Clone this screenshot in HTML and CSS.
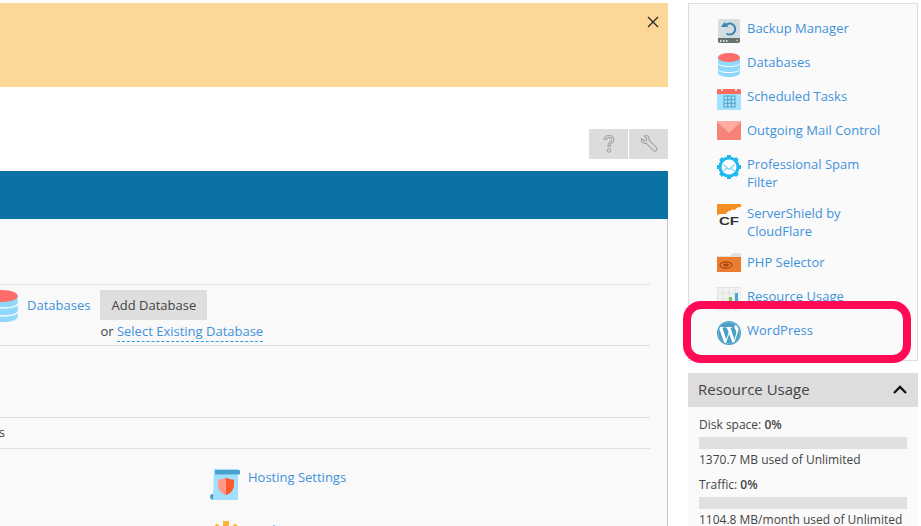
FILE: index.html
```html
<!DOCTYPE html>
<html lang="en">
<head>
<meta charset="utf-8">
<title>Hosting panel</title>
<link rel="stylesheet" href="styles.css">
</head>
<body>
<div class="page">
  <main class="main">
    <div class="banner">
      <svg class="close" width="12" height="12" viewBox="0 0 12 12"><path d="M1 1l10 10M11 1L1 11" stroke="#222" stroke-width="1.2" fill="none"/></svg>
    </div>
    <div class="toolbar">
      <button class="tool" type="button" aria-label="Help">
        <svg width="16" height="20" viewBox="0 0 16 20"><path d="M3 5.500C3 3 5.200 1.500 8 1.500s5 1.500 5 4c0 2.200-1.700 3-3 4-1 .8-1 1.500-1 3H7c0-2.200.3-3.200 1.600-4.200 1.200-.9 2-1.500 2-2.800 0-1.200-1.100-1.900-2.600-1.900S5.400 4.300 5.400 5.500z" fill="none" stroke="#a3a3a3" stroke-width="1.100"/><circle cx="8" cy="16.500" r="1.700" fill="none" stroke="#a3a3a3" stroke-width="1.100"/></svg>
      </button>
      <button class="tool" type="button" aria-label="Settings">
        <svg width="18" height="18" viewBox="0 0 18 18"><path d="M1.500 3.500L4 6l2.200-.4L6.800 3.400 4.200 1C6.400 0 8.500.8 9 2.800c.2.800.1 1.500-.1 2.200l7.300 7.300c1 1 1 2.300.2 3.100-.9.900-2.200.9-3.100 0L6 8.200c-.8.2-1.600.2-2.300 0C1.700 7.500 1 5.500 1.500 3.500z" fill="none" stroke="#a3a3a3" stroke-width="1.100" stroke-linejoin="round"/></svg>
      </button>
    </div>
    <div class="titlebar"></div>
    <div class="panel">
      <div class="row row-db">
        <svg class="db-icon" width="32" height="32" viewBox="0 0 24 24"><use href="#i-db"/></svg>
        <a class="link db-link" href="#">Databases</a>
        <div class="db-actions">
          <button class="btn" type="button">Add Database</button>
          <p class="or">or <a class="link dashed" href="#">Select Existing Database</a></p>
        </div>
      </div>
      <div class="row row-empty"></div>
      <div class="row row-text"><span class="clipped">Websites</span></div>
      <div class="tools">
        <a class="tool-item" href="#">
          <svg width="32" height="32" viewBox="0 0 32 32"><path d="M0 28.500c0-1.500 1-2.500 2-2.500h4v6H3.500C1.500 32 0 30.500 0 28.500z" fill="#4ba3cd"/><path d="M4 1h24v31H3z" fill="#a0e0fe"/><rect x="5" y="2" width="25" height="4.500" rx="1" fill="#4ba3cd"/><path d="M8 11.500c2.500 0 6-.8 8-1.800v17.500c-4-1.500-8-5-8-10z" fill="#ff9686"/><path d="M16 9.700c2 1 5.500 1.800 8 1.800v5.700c0 5-4 8.500-8 10z" fill="#ff5a2c"/></svg>
          <span class="link">Hosting Settings</span>
        </a>
        <a class="tool-item" href="#">
          <svg width="32" height="32" viewBox="0 0 32 32"><circle cx="16" cy="16" r="11" fill="#ffb62e"/><g fill="#ffb62e"><rect x="13" y="0" width="6" height="32"/><rect x="0" y="13" width="32" height="6"/><rect x="13" y="0" width="6" height="32" transform="rotate(45 16 16)"/><rect x="13" y="0" width="6" height="32" transform="rotate(-45 16 16)"/></g></svg>
          <span class="link">Applications</span>
        </a>
      </div>
    </div>
  </main>

  <aside class="side">
    <section class="tools-box">
      <ul class="menu">
        <li><svg width="24" height="24" viewBox="0 0 24 24"><rect x="1" y="0" width="22" height="24" rx="2" fill="#d4dde1"/><path d="M1 19h22v3a2 2 0 0 1-2 2H3a2 2 0 0 1-2-2z" fill="#66706f"/><rect x="3" y="21" width="1.500" height="2" fill="#ddd"/><rect x="6" y="21" width="1.500" height="2" fill="#ddd"/><rect x="9" y="21" width="1.500" height="2" fill="#ddd"/><circle cx="20" cy="21.500" r="1" fill="#9c6"/><path d="M8.500 6.500A5.500 5.500 0 1 1 9.500 14.500" fill="none" stroke="#3b86ad" stroke-width="2"/><path d="M4 8h7.500l-4-5z" fill="#3b86ad"/></svg><a class="link" href="#">Backup Manager</a></li>
        <li><svg width="24" height="24" viewBox="0 0 24 24"><use href="#i-db"/></svg><a class="link" href="#">Databases</a></li>
        <li><svg width="24" height="24" viewBox="0 0 24 24"><rect y="2" width="24" height="21" fill="#a4e1fe"/><path d="M0 7V4a2 2 0 0 1 2-2h20a2 2 0 0 1 2 2v3z" fill="#fd6a5c"/><rect x="4" y="0" width="2" height="4" rx="1" fill="#f3f3f3"/><rect x="18" y="0" width="2" height="4" rx="1" fill="#f3f3f3"/><g fill="none" stroke="#4a9cc0" stroke-width=".9"><rect x="7" y="9" width="11" height="11"/><path d="M10.700 9v11M14.300 9v11M7 12.700h11M7 16.300h11"/></g></svg><a class="link" href="#">Scheduled Tasks</a></li>
        <li><svg width="24" height="24" viewBox="0 0 24 24"><rect y="0" width="24" height="19" rx="1" fill="#f6827a"/><path d="M0 1a1 1 0 0 1 1-1h22a1 1 0 0 1 1 1L12 12z" fill="#ffaba2"/></svg><a class="link" href="#">Outgoing Mail Control</a></li>
        <li class="tall"><svg width="24" height="24" viewBox="0 0 24 24"><g fill="#1fb9ef"><rect x="10" y="0" width="4" height="24"/><rect x="0" y="10" width="24" height="4"/><rect x="10" y="0" width="4" height="24" transform="rotate(45 12 12)"/><rect x="10" y="0" width="4" height="24" transform="rotate(-45 12 12)"/></g><circle cx="12" cy="12" r="10.500" fill="#1fb9ef"/><circle cx="12" cy="12" r="7.500" fill="#fff"/><path d="M6.500 9.500l5.500 5 5.500-5M6.500 16l3.500-3M17.500 16L14 13" fill="none" stroke="#7fd5f5" stroke-width="1.300"/></svg><a class="link" href="#">Professional Spam Filter</a></li>
        <li class="tall"><svg width="24" height="24" viewBox="0 0 24 24"><path d="M0 0h24v3c-3 0-5 1-6 3-2-1-4-.5-5 1-2 0-3.500 1.500-4 3H3c-1.500 0-3 1-3 2z" fill="#f58d22"/><text class="cf" x="12" y="21" text-anchor="middle" textLength="20" lengthAdjust="spacingAndGlyphs">CF</text></svg><a class="link" href="#">ServerShield by CloudFlare</a></li>
        <li><svg width="24" height="24" viewBox="0 0 24 24"><path d="M0 3h13l3-3h7l1 1v18H0z" fill="#e1e1e1"/><rect y="4" width="24" height="15" fill="#ea7d2f"/><ellipse cx="9" cy="12" rx="6" ry="3.200" fill="none" stroke="#a84512" stroke-width="1.200"/><ellipse cx="9" cy="12" rx="3" ry="1.400" fill="#a84512"/></svg><a class="link" href="#">PHP Selector</a></li>
        <li><svg width="24" height="24" viewBox="0 0 24 24"><rect width="24" height="24" fill="#f2f2f2"/><path d="M0 .5h24M.5 0v24M6 0v24M12 0v24M18 0v24M0 6h24M0 12h24M0 18h24" stroke="#ddd" stroke-width=".7"/><rect x="7" y="14" width="3" height="8" fill="#e05a4c"/><rect x="12" y="10" width="3" height="12" fill="#7ac74f"/><rect x="18" y="6" width="3" height="16" fill="#4aa8d8"/></svg><a class="link" href="#">Resource Usage</a></li>
        <li><svg width="24" height="24" viewBox="0 0 24 24"><circle cx="12" cy="12" r="12" fill="#4ba0c8"/><circle cx="12" cy="12" r="10.700" fill="#fff"/><path fill="#4ba0c8" d="M21.469 6.825c.84 1.537 1.318 3.3 1.318 5.175 0 3.979-2.156 7.456-5.363 9.325l3.295-9.527c.615-1.54.82-2.771.82-3.864 0-.405-.026-.78-.07-1.11m-7.981.105c.647-.03 1.232-.105 1.232-.105.582-.075.514-.93-.067-.899 0 0-1.755.135-2.88.135-1.064 0-2.85-.15-2.85-.15-.585-.03-.661.855-.075.885 0 0 .54.061 1.125.09l1.68 4.605-2.37 7.08L5.354 6.9c.649-.03 1.234-.1 1.234-.1.585-.075.516-.93-.065-.896 0 0-1.746.138-2.874.138-.2 0-.438-.008-.69-.015C4.911 3.15 8.235 1.215 12 1.215c2.809 0 5.365 1.072 7.286 2.833-.046-.003-.091-.009-.141-.009-1.06 0-1.812.923-1.812 1.914 0 .89.513 1.643 1.06 2.531.411.72.89 1.643.89 2.977 0 .915-.354 1.994-.821 3.479l-1.075 3.585-3.9-11.61.001.014zM12 22.784c-1.059 0-2.081-.153-3.048-.437l3.237-9.406 3.315 9.087c.024.053.05.101.078.149-1.12.393-2.325.609-3.582.609M1.211 12c0-1.564.336-3.05.935-4.39L7.29 21.709C3.694 19.96 1.212 16.271 1.21 12"/></svg><a class="link" href="#">WordPress</a></li>
      </ul>
      <div class="highlight"></div>
    </section>
    <section class="usage">
      <header class="usage-head">
        <h2 class="usage-title">Resource Usage</h2>
        <svg width="14" height="9" viewBox="0 0 14 9"><path d="M1 8L7 2l6 6" fill="none" stroke="#111" stroke-width="2.300"/></svg>
      </header>
      <div class="usage-body">
        <div class="meter">
          <div>Disk space: <b>0%</b></div>
          <div class="bar"></div>
          <div>1370.7 MB used of Unlimited</div>
        </div>
        <div class="meter">
          <div>Traffic: <b>0%</b></div>
          <div class="bar"></div>
          <div>1104.8 MB/month used of Unlimited</div>
        </div>
      </div>
    </section>
  </aside>
</div>
<svg class="defs" width="0" height="0" aria-hidden="true">
  <symbol id="i-db" viewBox="0 0 24 24">
    <path d="M1 4v16c0 2.200 5 4 11 4s11-1.800 11-4V4z" fill="#8fd8fc"/>
    <ellipse cx="12" cy="4.500" rx="11" ry="4.500" fill="#fd6d6a"/>
    <path d="M1 10.500c1 2 5.500 3 11 3s10-1 11-3M1 16.500c1 2 5.500 3 11 3s10-1 11-3" fill="none" stroke="#fff" stroke-width="1"/>
  </symbol>
</svg>
</body>
</html>
```
FILE: styles.css
```css
* { box-sizing: border-box; }
html, body { margin: 0; padding: 0; height: 526px; overflow: hidden; background: #fff; }
body { font-family: "Open Sans", sans-serif; font-size: 13px; line-height: 18px; color: #444; }
.defs { position: absolute; }
.page { display: flex; height: 526px; overflow: hidden; }
.main { width: 668px; flex: none; padding-top: 3px; overflow: hidden; }
.banner { height: 84px; background: #fdd798; display: flex; justify-content: flex-end; align-items: flex-start; padding: 13px 9px 0 0; }
.toolbar { height: 84px; display: flex; justify-content: flex-end; align-items: flex-end; gap: 1px; padding-bottom: 12px; }
.tool { width: 39px; height: 30px; border: 0; padding: 0; background: #dcdcdc; display: flex; align-items: center; justify-content: center; }
.titlebar { height: 48px; background: #0a72a4; }
.panel { height: 307px; background: #f9f9f9; border-right: 1px solid #c4c4c4; padding: 65px 17px 0 0; overflow: hidden; }
.row { border-top: 1px solid #dfdfdf; }
.row-db { height: 61px; display: flex; align-items: flex-start; padding-top: 5px; }
.db-icon { flex: none; margin-left: -13px; }
.db-link { margin: 6px 10px 0 8px; }
.db-actions { display: flex; flex-direction: column; }
.btn { width: 107px; height: 30px; border: 0; padding: 0; background: #dedede; color: #444; font: 13px/18px "Open Sans", sans-serif; }
.or { margin: 2px 0 0 0; }
.row-empty { height: 72px; }
.row-text { height: 31px; padding-top: 5px; }
.clipped { display: block; margin-left: -50px; }
.tools { border-top: 1px solid #dfdfdf; padding: 19px 0 0 210px; display: flex; flex-direction: column; gap: 21px; }
.tool-item { display: flex; align-items: flex-start; gap: 6px; text-decoration: none; }
.tool-item svg { flex: none; }
.link { color: #4192db; text-decoration: none; }
.dashed { border-bottom: 1px dashed #2e9be0; padding-bottom: 1px; }
.side { width: 230px; flex: none; margin-left: 20px; padding-top: 3px; }
.tools-box { position: relative; height: 358px; background: #fafafa; border: 1px solid #ddd; padding: 15px 0 0 28px; }
.menu { list-style: none; margin: 0; padding: 0; }
.menu li { display: flex; align-items: flex-start; gap: 6px; margin-bottom: 10px; }
.menu svg { flex: none; }
.menu a { padding-bottom: 3px; max-width: 140px; }
.cf { font: bold 11px "Liberation Sans", sans-serif; fill: #333; }
.highlight { position: absolute; left: -6px; top: 297px; width: 228px; height: 62px; border: 8px solid #ff0a55; border-radius: 18px; }
.usage { margin-top: 12px; }
.usage-head { height: 34px; background: #dddddd; display: flex; align-items: center; justify-content: space-between; padding: 0 11px 2px 10px; }
.usage-title { margin: 0; font-size: 15px; font-weight: 400; color: #444; }
.usage-body { background: #fafafa; padding: 9px 11px 0 11px; font-size: 12px; }
.meter { margin-bottom: 7px; }
.meter b { font-weight: 600; }
.bar { height: 12px; background: #e0e0e0; margin: 3px 0 2px; }
```
